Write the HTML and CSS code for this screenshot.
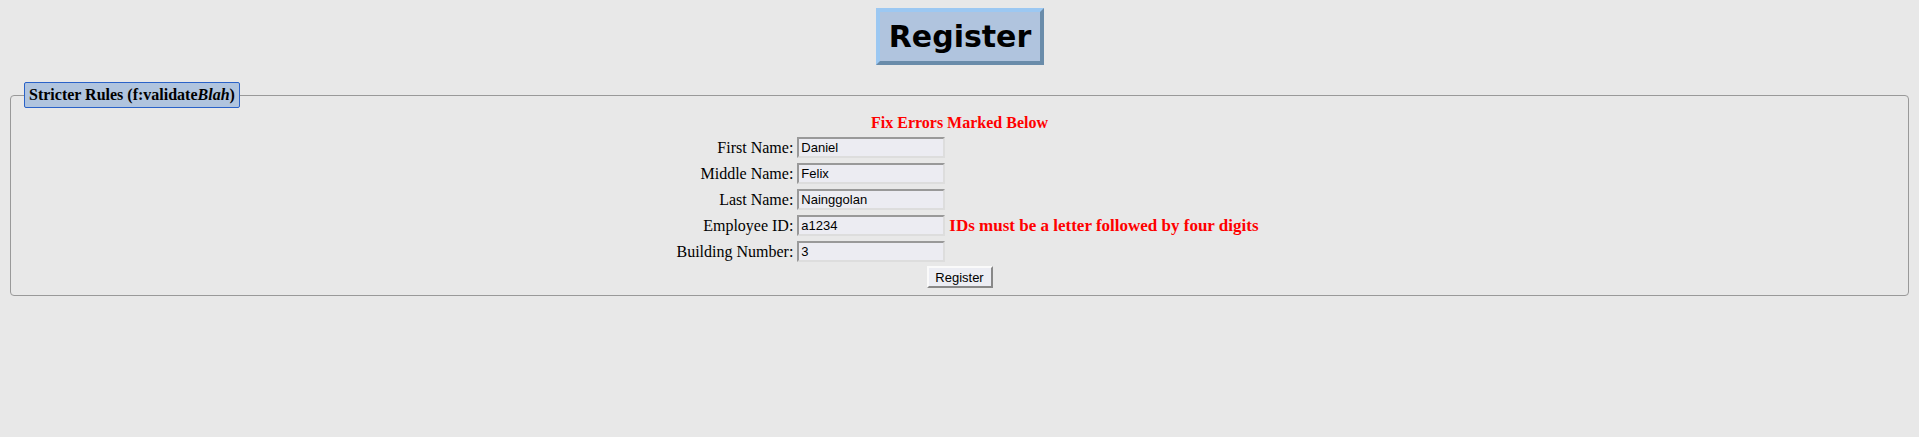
FILE: index.html
```html
<!DOCTYPE html>
<html>
<head>
<meta charset="utf-8">
<title>Register</title>
<link rel="stylesheet" href="styles.css">
</head>
<body>
<div class="title-wrap"><h1 class="title">Register</h1></div>
<fieldset class="box">
  <legend class="legend">Stricter Rules (f:validate<i>Blah</i>)</legend>
  <div class="errhead">Fix Errors Marked Below</div>
  <table class="form">
    <tr><td class="lbl">First Name:</td><td><input class="field" value="Daniel"></td><td></td></tr>
    <tr><td class="lbl">Middle Name:</td><td><input class="field" value="Felix"></td><td></td></tr>
    <tr><td class="lbl">Last Name:</td><td><input class="field" value="Nainggolan"></td><td></td></tr>
    <tr><td class="lbl">Employee ID:</td><td><input class="field" value="a1234"></td><td class="err">IDs must be a letter followed by four digits</td></tr>
    <tr><td class="lbl">Building Number:</td><td><input class="field" value="3"></td><td></td></tr>
  </table>
  <div class="actions"><button class="btn">Register</button></div>
</fieldset>
</body>
</html>
```
FILE: styles.css
```css
html, body { margin: 0; padding: 0; }
body {
  background: #e8e8e8;
  font-family: "Liberation Serif", "Times New Roman", serif;
  font-size: 16px;
  color: #000;
  padding: 8px 10px;
}
.title-wrap { display: flex; justify-content: center; }
.title {
  margin: 0;
  margin-left: 1px;
  width: 160px;
  height: 49px;
  box-sizing: content-box;
  display: flex;
  align-items: center;
  justify-content: center;
  background: #b0c4de;
  border: 4px solid;
  border-color: #9cc8f2 #6a8caa #6a8caa #9cc8f2;
  font-family: "DejaVu Sans", Verdana, sans-serif;
  font-weight: bold;
  font-size: 30px;
}
.box {
  margin: 17px 0 0 0;
  padding: 0 0 7px 0;
  border: 1px solid #999;
  border-radius: 4px;
  width: 1897px;
  box-sizing: content-box;
  min-width: 0;
}
.legend {
  margin-left: 13px;
  padding: 3px 4px 3px 4px;
  background: #b0c4de;
  border: 1px solid #2a62c8;
  border-radius: 2px;
  font-weight: bold;
  font-size: 16px;
}
.errhead {
  text-align: center;
  color: #f00;
  font-weight: bold;
  margin-top: 6px;
  height: 19px;
}
.form {
  margin: 0 auto;
  border-collapse: separate;
  border-spacing: 2px 3px;
}
.form td { padding: 1px; }
.lbl { text-align: right; padding-left: 17px !important; }
.err { color: #f00; font-weight: bold; font-size: 17px; }
.field {
  width: 140px;
  height: 17px;
  padding: 0 2px;
  margin: 0;
  border: 2px solid;
  border-color: #999 #ddd #ddd #999;
  background: #ececf2;
  font-family: "Liberation Sans", Tahoma, sans-serif;
  font-size: 13px;
  color: #000;
}
.actions { display: flex; justify-content: center; margin-left: 0; }
.btn {
  width: 66px;
  height: 22px;
  padding: 0;
  border: 2px solid;
  border-color: #fafafa #888 #888 #fafafa;
  background: #ecedf3;
  font-family: "Liberation Sans", Tahoma, sans-serif;
  font-size: 13px;
  color: #000;
}
```
